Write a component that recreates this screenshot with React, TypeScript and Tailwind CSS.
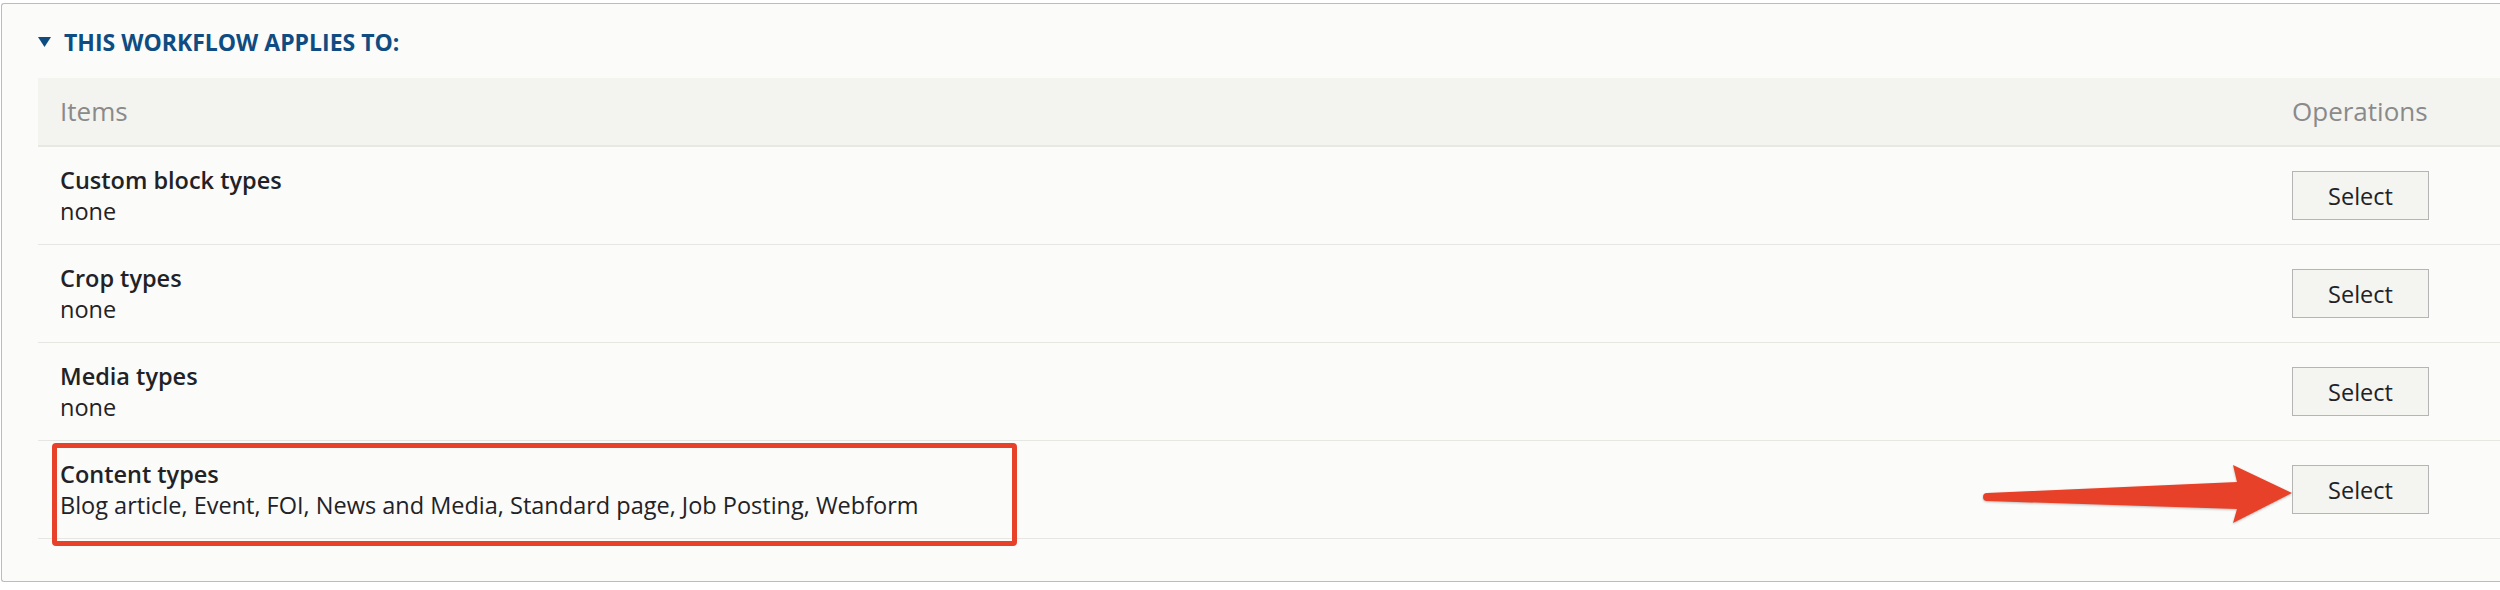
import React from "react";

const rows = [
  { title: "Custom block types", value: "none" },
  { title: "Crop types", value: "none" },
  { title: "Media types", value: "none" },
  {
    title: "Content types",
    value:
      "Blog article, Event, FOI, News and Media, Standard page, Job Posting, Webform",
  },
];

export default function App() {
  return (
    <div
      className="w-[2500px] h-[590px] overflow-hidden bg-white pt-[3px] pl-[1px]"
      style={{ fontFamily: '"Open Sans", "Noto Sans", sans-serif' }}
    >
      <div className="w-[2530px] h-[579px] bg-[#fbfbf9] border-t border-l border-b border-[#bcbcbc] rounded-l-[3px] pl-[36px] pt-[22px]">
        <div className="flex items-center h-[32px] text-[#0f4c81]">
          <span className="w-[26px] flex items-center">
            <svg width="13" height="10" viewBox="0 0 13 10">
              <path d="M0 0 L13 0 L6.5 10 Z" fill="#0f4c81" />
            </svg>
          </span>
          <span className="text-[23px] font-bold leading-[32px] uppercase">
            This workflow applies to:
          </span>
        </div>
        <div className="relative mt-[20px] w-[2462px]">
          <div className="grid grid-cols-[1fr_208px] h-[69px] bg-[#f3f3f0] border-b-2 border-[#e7e7e3] text-[26px] text-[#8a8a8a]">
            <div className="flex items-center pl-[22px]">Items</div>
            <div className="flex items-center">Operations</div>
          </div>
          {rows.map((r) => (
            <div
              key={r.title}
              className="grid grid-cols-[1fr_208px] h-[98px] border-b border-[#e6e6e2]"
            >
              <div className="flex flex-col justify-center pl-[22px] text-[23.5px] leading-[31px] text-[#222226]">
                <div className="font-semibold">{r.title}</div>
                <div>{r.value}</div>
              </div>
              <div className="flex items-center">
                <button className="w-[137px] h-[49px] pt-[2px] border border-[#b5b5b5] bg-[#f4f4f1] text-[23.5px] text-[#222226] flex items-center justify-center">
                  Select
                </button>
              </div>
            </div>
          ))}
          <div className="absolute left-[14px] top-[365px] w-[965px] h-[103px] border-[5px] border-[#e8412a] rounded-[4px] pointer-events-none" />
          <svg
            className="absolute left-[1942px] top-[377px] pointer-events-none"
            width="320"
            height="80"
            viewBox="0 0 320 80"
            style={{ filter: "drop-shadow(0px 1px 1px rgba(0,0,0,0.25))" }}
          >
            <path
              d="M7 38 L257 27 L253 10 L312 38 L253 68 L257 54 L7 46 A4 4 0 0 1 7 38 Z"
              fill="#e8412a"
            />
          </svg>
        </div>
      </div>
    </div>
  );
}
